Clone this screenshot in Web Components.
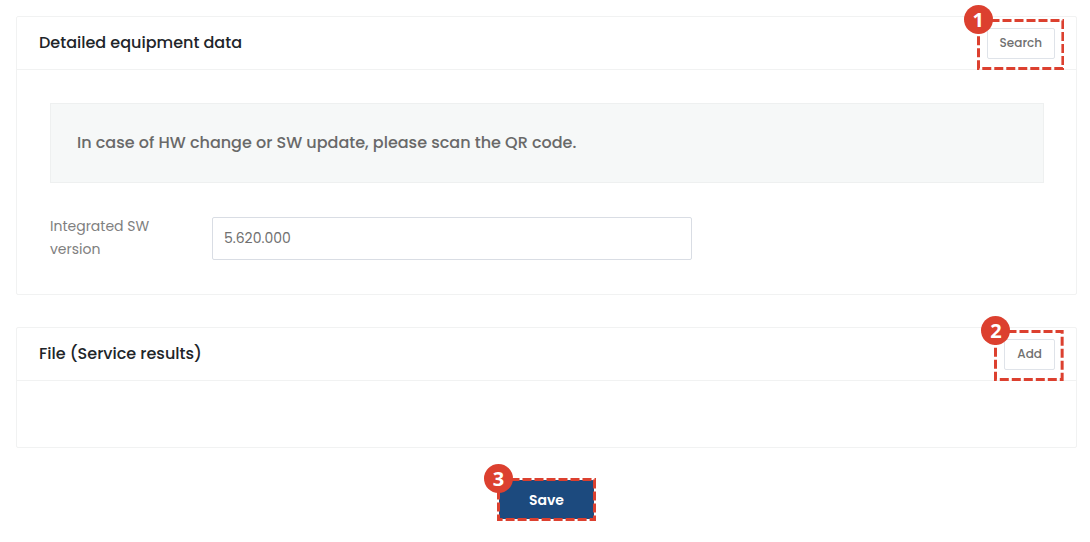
<!DOCTYPE html>
<html lang="en">
<head>
<meta charset="utf-8">
<title>Service report</title>
<style>
body { margin: 0; background: #fff; font-family: Poppins, Inter, sans-serif; color: #212529; }
</style>
</head>
<body>
<service-page></service-page>
<script>
const define = (name, html, setup) => {
  const template = document.createElement('template');
  template.innerHTML = html;
  customElements.define(name, class extends HTMLElement {
    constructor() {
      super();
      this.attachShadow({ mode: 'open' }).append(template.content.cloneNode(true));
    }
    connectedCallback() { if (setup) setup(this, this.shadowRoot); }
  });
};

define('panel-card', `
<style>
:host { display: block; border: 1px solid #f1f2f2; border-radius: 2px; background: #fff; }
header { display: flex; align-items: center; justify-content: space-between; height: 52px; padding: 0 21px 0 22px; border-bottom: 1px solid #f1f2f2; }
h2 { margin: 0; font-size: 16px; font-weight: 500; line-height: 24px; }
.body { padding: 33px 32px 33px 33px; }
</style>
<header><h2></h2><slot name="action"></slot></header>
<div class="body"><slot></slot></div>`,
(el, root) => { root.querySelector('h2').textContent = el.getAttribute('heading'); });

define('notice-box', `
<style>
:host { display: block; padding: 27px 26px; border: 1px solid #eef0f0; background: #f6f8f8; color: #696969; font-size: 16px; font-weight: 500; line-height: 24px; }
</style>
<slot></slot>`);

define('text-field', `
<style>
:host { display: flex; align-items: flex-start; gap: 34px; color: #808080; }
label { width: 128px; margin-top: -2px; font-size: 14px; line-height: 23px; }
input { box-sizing: border-box; flex: 0 1 480px; min-width: 0; height: 43px; padding: 0 11px; border: 1px solid #d9dde4; border-radius: 2px; background: #fff; color: #707070; font: 14px/20px Poppins, Inter, sans-serif; }
</style>
<label for="field"></label><input id="field" type="text">`,
(el, root) => {
  root.querySelector('label').textContent = el.getAttribute('label');
  root.querySelector('input').value = el.getAttribute('value');
});

define('app-button', `
<style>
:host { display: block; }
button { display: block; box-sizing: border-box; height: 31px; padding: 0 12px; border: 1px solid #dfe3e9; border-radius: 2px; background: #fff; color: #707070; font: 500 12px/16px Poppins, Inter, sans-serif; cursor: pointer; }
:host([primary]) button { height: 39px; padding: 0 29px; border-color: #1c4a7e; background: #1c4a7e; color: #fff; font-size: 14px; font-weight: 600; }
</style>
<button type="button"><slot></slot></button>`);

define('step-callout', `
<style>
:host { display: block; position: relative; }
.mark { position: absolute; inset: var(--ring, -9px -9px -11px -10px); pointer-events: none; }
svg { display: block; width: 100%; height: 100%; }
rect { x: 1.5px; y: 1.5px; width: calc(100% - 3px); height: calc(100% - 3px); fill: none; stroke: #dc402f; stroke-width: 3; stroke-dasharray: 9 3; }
span { position: absolute; left: -13px; top: -14px; width: 29px; height: 29px; border-radius: 50%; background: #dc402f; color: #fff; font: 700 20px/29px "Open Sans", sans-serif; text-align: center; }
</style>
<slot></slot>
<div class="mark"><svg aria-hidden="true"><rect/></svg><span></span></div>`,
(el, root) => { root.querySelector('span').textContent = el.getAttribute('step'); });

define('service-page', `
<style>
:host { display: block; padding: 16px 13px 21px 16px; }
main { display: grid; gap: 32px; }
text-field { margin-top: 34px; }
.save { display: flex; justify-content: center; }
.save step-callout { --ring: -2px; }
</style>
<main>
  <panel-card heading="Detailed equipment data">
    <step-callout slot="action" step="1"><app-button>Search</app-button></step-callout>
    <notice-box>In case of HW change or SW update, please scan the QR code.</notice-box>
    <text-field label="Integrated SW version" value="5.620.000"></text-field>
  </panel-card>
  <panel-card heading="File (Service results)">
    <step-callout slot="action" step="2"><app-button>Add</app-button></step-callout>
  </panel-card>
  <div class="save"><step-callout step="3"><app-button primary>Save</app-button></step-callout></div>
</main>`);
</script>
</body>
</html>
